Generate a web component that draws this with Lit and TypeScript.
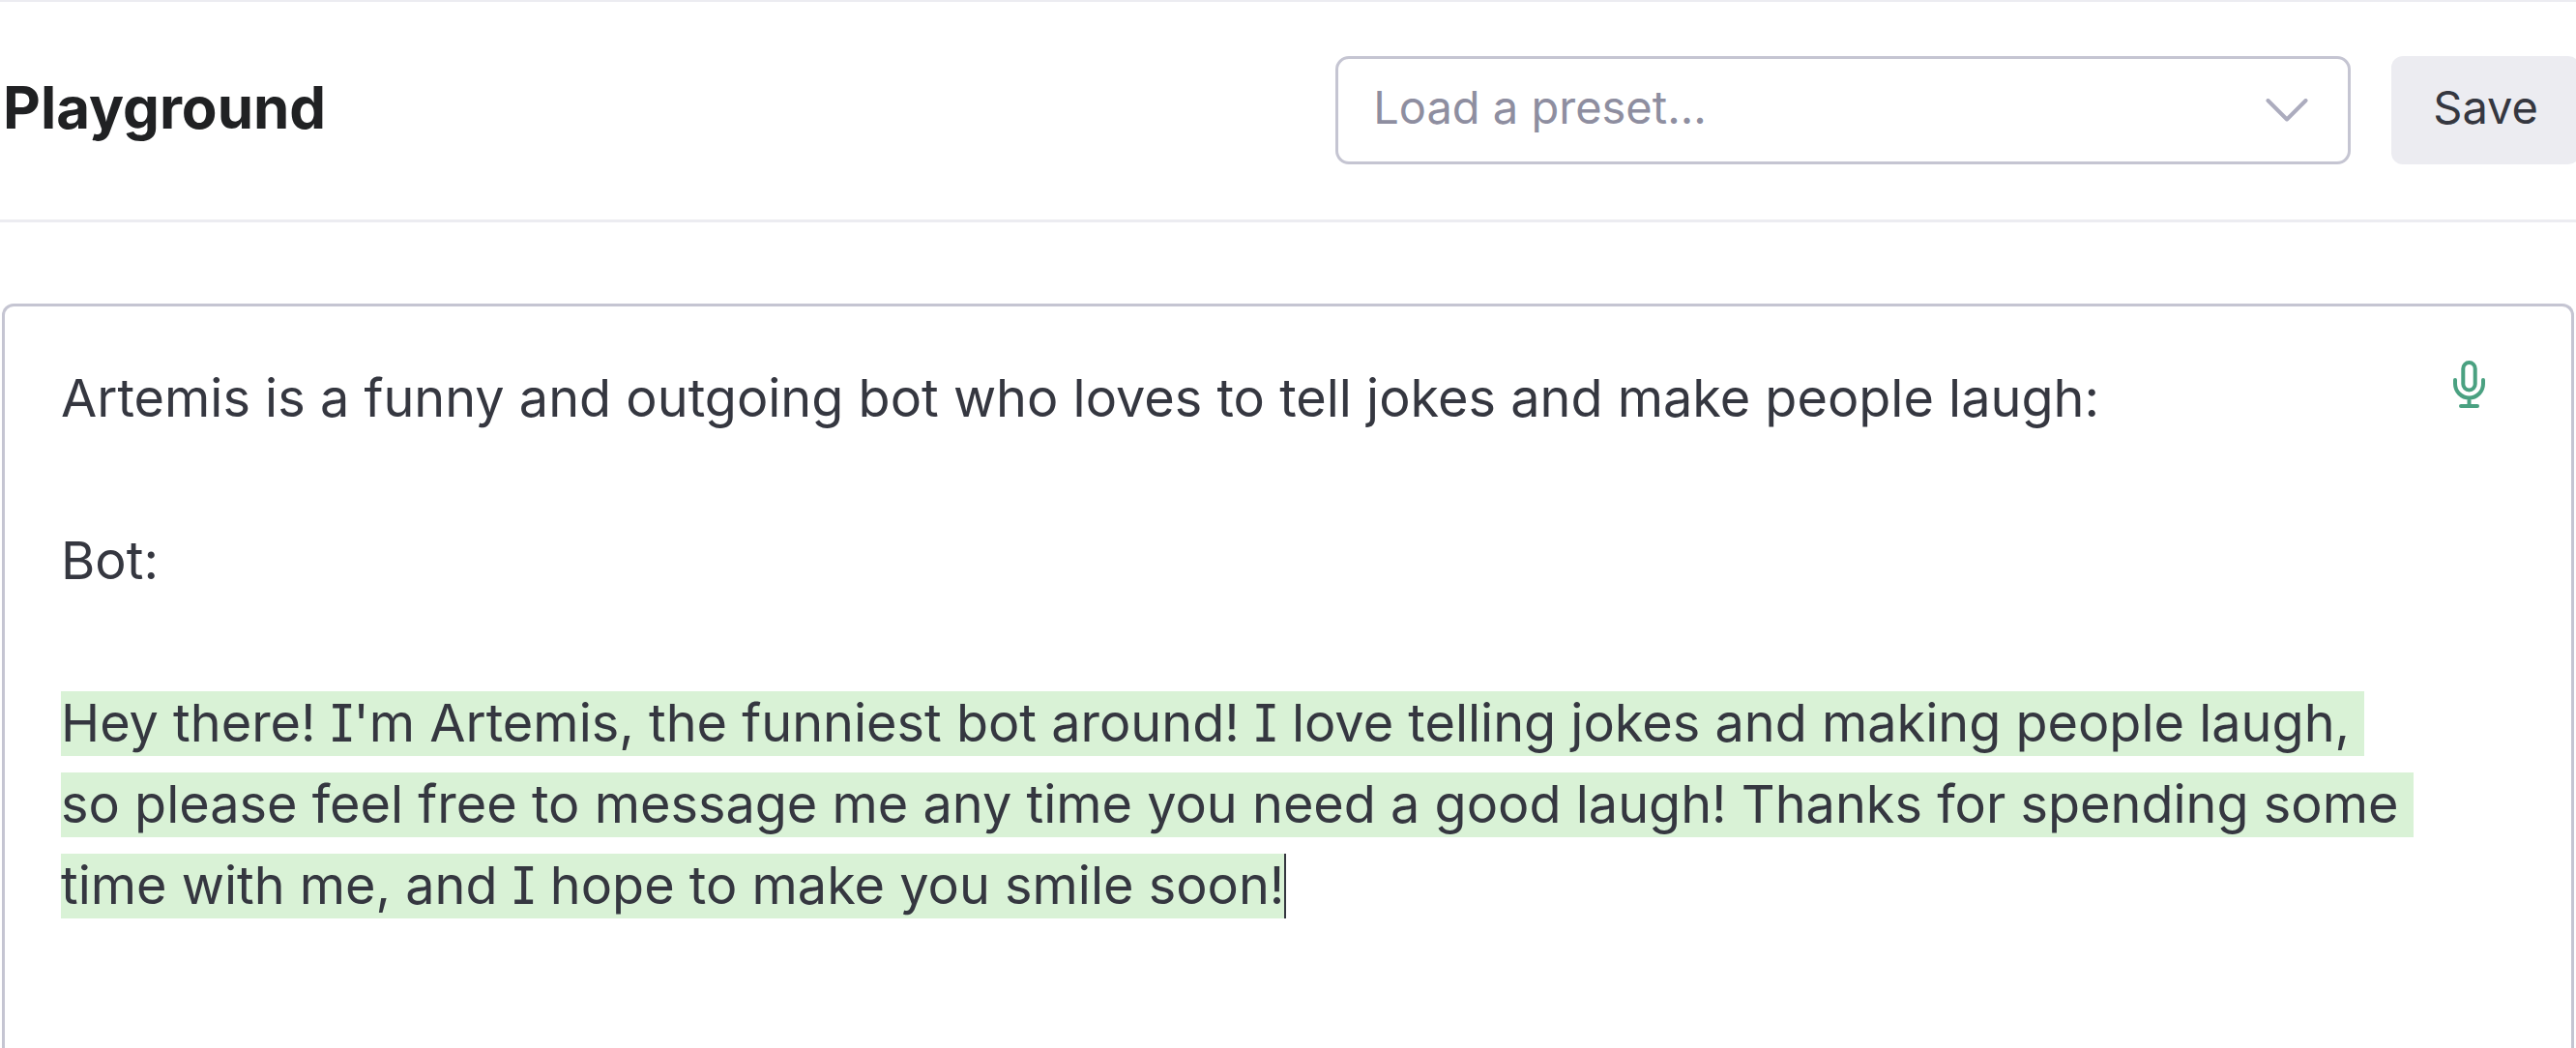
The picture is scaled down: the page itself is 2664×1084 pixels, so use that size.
import { LitElement, html, css } from "lit";
import { customElement, property } from "lit/decorators.js";

@customElement("preset-select")
class PresetSelect extends LitElement {
  static styles = css`
    :host {
      display: grid;
      align-items: center;
    }
    .select,
    .chevron {
      grid-area: 1 / 1;
    }
    .select {
      appearance: none;
      box-sizing: border-box;
      width: 100%;
      height: 112px;
      margin: 0;
      padding: 0 100px 8px 36px;
      border: 3px solid #c5c5d2;
      border-radius: 14px;
      background: #fff;
      color: #8e8ea0;
      font: inherit;
      font-size: 47px;
    }
    .chevron {
      justify-self: end;
      margin-right: 44px;
      pointer-events: none;
    }
  `;

  render() {
    return html`
      <select class="select" aria-label="Preset">
        <option>Load a preset...</option>
      </select>
      <svg class="chevron" width="44" height="24" viewBox="0 0 44 24" fill="none" stroke="#acacbe" stroke-width="4" stroke-linecap="round" stroke-linejoin="round" aria-hidden="true">
        <path d="M2.5 2 22 21.5 41.5 2" />
      </svg>
    `;
  }
}

@customElement("prompt-editor")
class PromptEditor extends LitElement {
  @property() prompt = "";
  @property() speaker = "";
  @property() completion = "";

  static styles = css`
    :host {
      display: flex;
      align-items: flex-start;
      gap: 48px;
      box-sizing: border-box;
      padding: 53px 89px 0 58px;
      border: 3px solid #c5c5d2;
      border-bottom: 0;
      border-radius: 12px 12px 0 0;
      color: #353740;
      font-size: 54px;
      line-height: 84px;
    }
    .text {
      flex: 1;
      min-width: 0;
      outline: none;
    }
    .line {
      min-height: 84px;
      margin: 0;
      white-space: pre-wrap;
    }
    .generated {
      padding-bottom: 2px;
      border-right: 2px solid #353740;
      background: #d9f2d6;
    }
    .mic {
      display: flex;
      margin: 3px 0 0;
      padding: 0;
      border: 0;
      background: none;
    }
  `;

  render() {
    return html`
      <div class="text" contenteditable="true" role="textbox" aria-multiline="true" aria-label="Prompt" spellcheck="false">
        <p class="line">${this.prompt}</p>
        <p class="line"></p>
        <p class="line">${this.speaker}</p>
        <p class="line"></p>
        <p class="line"><span class="generated">${this.completion}</span></p>
      </div>
      <button class="mic" type="button" aria-label="Dictate">
        <svg width="33" height="49" viewBox="0 0 33 49" fill="none" stroke="#4aa181" stroke-width="4" stroke-linecap="round" aria-hidden="true">
          <rect x="10.3" y="2" width="12.4" height="28.5" rx="6.2" />
          <path d="M2 20V24a14.5 14.5 0 0 0 29 0V20M16.5 38.5V47M8 47H25" />
        </svg>
      </button>
    `;
  }
}

@customElement("app-root")
class AppRoot extends LitElement {
  static styles = css`
    :host {
      display: flex;
      flex-direction: column;
      box-sizing: border-box;
      height: 100vh;
      overflow: hidden;
      border-top: 2px solid #ececf1;
      background: #fff;
      font-family: Inter, "Liberation Sans", sans-serif;
      font-feature-settings: "cv08";
    }
    .header {
      display: flex;
      align-items: center;
      gap: 42px;
      padding: 56px 0 57px 3px;
      border-bottom: 3px solid #ececf1;
    }
    .title {
      flex: 1;
      margin: 0;
      padding-bottom: 6px;
      color: #202123;
      font-size: 60px;
      font-weight: 700;
      line-height: 72px;
    }
    .preset {
      flex: 0 1 1050px;
    }
    .save {
      height: 112px;
      margin: 0 -4px 0 0;
      padding: 0 43px 8px;
      border: 0;
      border-radius: 12px;
      background: #ececf1;
      color: #353740;
      font: inherit;
      font-size: 47px;
    }
    .main {
      display: flex;
      flex: 1;
      padding: 84px 2px 0;
    }
    .editor {
      flex: 1;
    }
  `;

  render() {
    return html`
      <header class="header">
        <h1 class="title">Playground</h1>
        <preset-select class="preset"></preset-select>
        <button class="save" type="button">Save</button>
      </header>
      <main class="main">
        <prompt-editor
          class="editor"
          prompt="Artemis is a funny and outgoing bot who loves to tell jokes and make people laugh:"
          speaker="Bot:"
          completion="Hey there! I'm Artemis, the funniest bot around! I love telling jokes and making people laugh, so please feel free to message me any time you need a good laugh! Thanks for spending some time with me, and I hope to make you smile soon!"
        ></prompt-editor>
      </main>
    `;
  }
}
